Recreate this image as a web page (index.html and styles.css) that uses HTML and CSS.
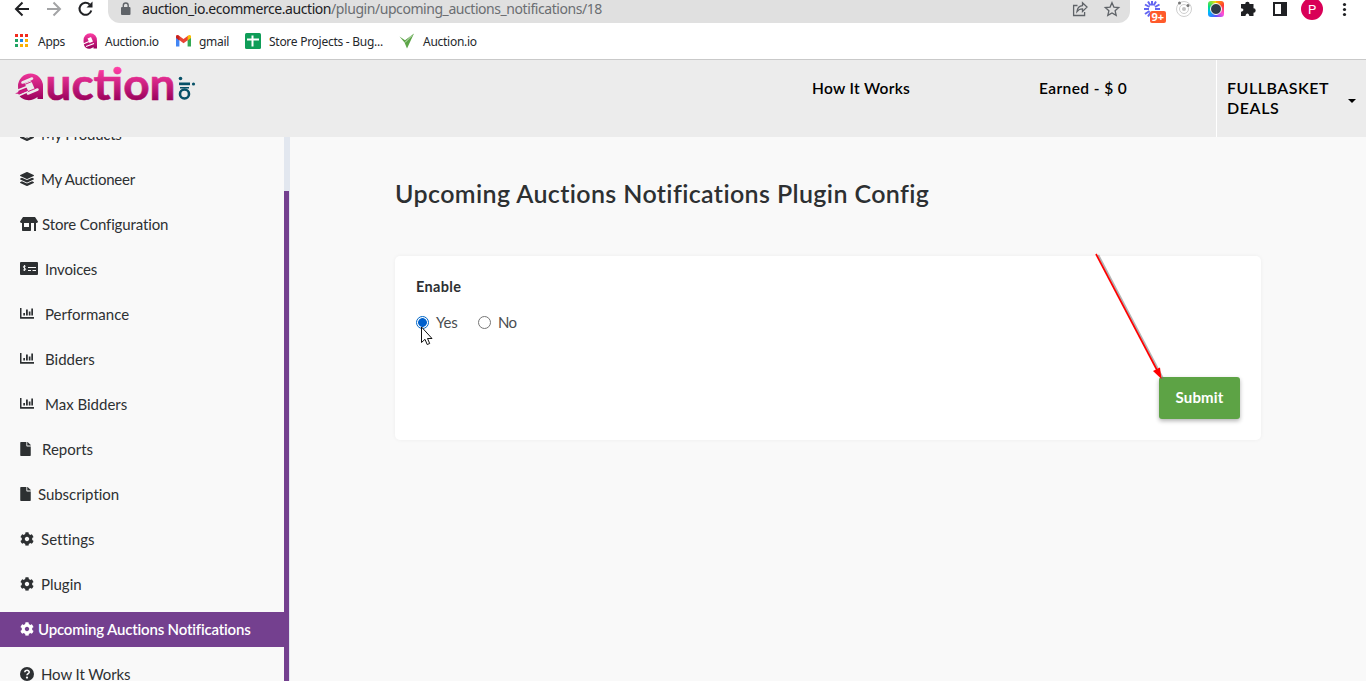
FILE: index.html
```html
<!DOCTYPE html>
<html lang="en">
<head>
<meta charset="utf-8">
<title>Upcoming Auctions Notifications Plugin Config</title>
<link rel="stylesheet" href="styles.css">
</head>
<body>
<svg class="defs" width="0" height="0">
  <defs>
    <linearGradient id="pink" x1="0" y1="0" x2="0" y2="1"><stop offset="0" stop-color="#ff3fa6"/><stop offset="1" stop-color="#98005a"/></linearGradient>
    <linearGradient id="pinkLogo" gradientUnits="userSpaceOnUse" x1="0" y1="8" x2="0" y2="41"><stop offset="0" stop-color="#ff3fa6"/><stop offset="1" stop-color="#98005a"/></linearGradient>
    <symbol id="layers" viewBox="0 0 512 512"><path d="M12.4 148l232.900 105.700c6.800 3.100 14.500 3.100 21.300 0l233-105.700c16.600-7.500 16.600-32.500 0-40L266.700 2.300a25.600 25.600 0 0 0-21.300 0L12.400 108c-16.600 7.500-16.600 32.500 0 40zm487.200 88.300l-58.100-26.300-161.600 73.300c-7.600 3.400-15.600 5.200-23.900 5.200s-16.300-1.700-23.900-5.200L70.500 210l-58.100 26.300c-16.600 7.500-16.600 32.500 0 40l232.900 105.600c6.800 3.100 14.500 3.100 21.300 0L499.600 276.300c16.600-7.500 16.600-32.500 0-40zm0 127.800l-57.900-26.200-161.900 73.400c-7.600 3.400-15.600 5.200-23.900 5.200s-16.300-1.700-23.900-5.200L70.300 337.900l-57.900 26.200c-16.600 7.500-16.600 32.500 0 40l232.900 105.600c6.800 3.100 14.500 3.100 21.300 0L499.600 404.100c16.600-7.500 16.600-32.500 0-40z"/></symbol>
    <symbol id="store" viewBox="0 0 18 14"><path d="M3 0h12l2.800 4.200c.5 1-.2 1.800-1.300 1.800h-15C.4 6-.3 5.200.2 4.200zM2 6h2v4h5V6h2v7c0 .6-.4 1-1 1H3c-.6 0-1-.4-1-1zm12 0h2v8h-2z"/></symbol>
    <symbol id="check" viewBox="0 0 18 13"><rect width="18" height="13" rx="1"/><path d="M8 5.500h8M8 8.500h3M12.500 8.500H16" stroke="#f9f9f9" stroke-width="1.100"/><path d="M5.700 4.300C4.500 3.600 3.200 4 3.300 5c.1 1.200 2.400.9 2.400 2.200 0 1-1.500 1.400-2.600.6M4.500 3v6" fill="none" stroke="#f9f9f9" stroke-width=".9"/></symbol>
    <symbol id="chart" viewBox="0 0 14 11"><path d="M0 0h1.500v9H14v1.800H.6a.6.600 0 0 1-.6-.6zM3.300 5H5v2.500H3.300zM6 1.500h1.800v6H6zM8.800 3.500h1.700v4H8.800zM11.300.5H13v7h-1.700z"/></symbol>
    <symbol id="file" viewBox="0 0 384 512"><path d="M224 136V0H24C10.700 0 0 10.700 0 24v464c0 13.300 10.700 24 24 24h336c13.300 0 24-10.700 24-24V160H248c-13.200 0-24-10.800-24-24zm160-14.100v6.100H256V0h6.100c6.400 0 12.500 2.500 17 7l97.900 98c4.500 4.500 7 10.600 7 16.900z"/></symbol>
    <symbol id="cog" viewBox="0 0 512 512"><path d="M487.400 315.700l-42.600-24.600c4.300-23.200 4.300-47 0-70.200l42.600-24.600c4.900-2.800 7.100-8.600 5.500-14-11.100-35.600-30-67.800-54.700-94.600-3.800-4.100-10-5.100-14.800-2.300L380.800 110c-17.900-15.400-38.500-27.300-60.800-35.100V25.800c0-5.600-3.900-10.500-9.400-11.700-36.700-8.200-74.300-7.800-109.200 0-5.500 1.200-9.400 6.100-9.400 11.700V75c-22.200 7.900-42.800 19.800-60.800 35.100L88.700 85.500c-4.900-2.800-11-1.900-14.800 2.300-24.700 26.700-43.600 58.900-54.700 94.600-1.700 5.400.6 11.200 5.500 14L67.300 221c-4.300 23.200-4.300 47 0 70.200l-42.600 24.600c-4.900 2.800-7.100 8.600-5.500 14 11.100 35.600 30 67.800 54.700 94.600 3.800 4.100 10 5.100 14.800 2.300l42.600-24.600c17.900 15.400 38.500 27.300 60.800 35.100v49.200c0 5.600 3.900 10.500 9.400 11.700 36.700 8.200 74.300 7.800 109.200 0 5.500-1.200 9.400-6.100 9.400-11.700v-49.200c22.200-7.900 42.800-19.800 60.800-35.100l42.600 24.600c4.900 2.800 11 1.900 14.800-2.300 24.700-26.700 43.600-58.900 54.700-94.600 1.500-5.500-.7-11.300-5.600-14.100zM256 336c-44.100 0-80-35.900-80-80s35.900-80 80-80 80 35.900 80 80-35.900 80-80 80z"/></symbol>
    <symbol id="question" viewBox="0 0 14 14"><circle cx="7" cy="7" r="7"/><path d="M4.800 5.300C5 2.600 9.300 2.700 9.200 5.200 9.100 6.700 7.100 6.600 7 8.200" fill="none" stroke="#f9f9f9" stroke-width="1.600"/><circle cx="7" cy="10.600" r="1.150" fill="#f9f9f9"/></symbol>
  </defs>
</svg>
<div class="window">
  <div class="chrome">
    <div class="toolbar">
      <div class="nav-icons">
        <svg width="100" height="19" viewBox="0 0 100 19" fill="none" stroke-width="2">
          <path d="M29 9H16.500M22.500 2.500 16 9l6.500 6.500" stroke="#202124"/>
          <path d="M47 9h12.500M53.500 2.500 60 9l-6.500 6.500" stroke="#a3a4a6"/>
          <path d="M91.300 10.500a6 6 0 1 1-1.600-6" stroke="#202124"/><path d="M92.500 1.500v6h-6z" fill="#202124"/>
        </svg>
      </div>
      <div class="omnibox">
        <svg class="lock" width="10" height="14" viewBox="0 0 10 14"><rect y="5" width="9.500" height="8" rx="1" fill="#5f6368"/><path d="M2.300 5.500V3.500a2.450 2.450 0 0 1 4.900 0v2" fill="none" stroke="#5f6368" stroke-width="1.400"/></svg>
        <div class="url"><span class="host">auction_io.ecommerce.auction</span><span class="path">/plugin/upcoming_auctions_notifications/18</span></div>
        <svg class="omni-actions" width="50" height="19" viewBox="0 0 50 19" fill="none" stroke="#5f6368" stroke-width="1.300"><path d="M5.500 5.500H1.600v10h11v-3.500M5 11.500c.5-4 2.700-5.600 5.500-5.800V2.800l4.500 4.300-4.500 4.400V8.800C8.200 8.800 6.500 9.500 5 11.500z"/><path d="m40 2.700 1.900 4.400 4.800.4-3.600 3.200 1.100 4.700-4.200-2.500-4.200 2.500 1.100-4.700-3.600-3.200 4.800-.4z"/></svg>
      </div>
      <div class="extensions">
        <svg width="226" height="24" viewBox="1140 0 226 24">
          <g stroke="#6366f1" stroke-width="2"><path d="M1144 9h5M1145 4.500l4.500 2.500M1148 1.500l2.500 4M1152 1v4.500M1156 1.500l-2.500 4M1159.500 4.500 1155 7M1145 14l4.500-3M1148 16.500l2.500-4M1155 9h5"/></g>
          <rect x="1150" y="11" width="16" height="12" rx="2" fill="#ff5a2b"/><text class="badge-text" x="1151.500" y="21" fill="#fff">9+</text>
          <g fill="none" stroke="#cfcfcf"><circle cx="1184" cy="9" r="7.500"/><circle cx="1184" cy="9" r="4.500"/></g><circle cx="1184" cy="9" r="2" fill="#c4c4c4"/><circle cx="1179.500" cy="3" r="1.500" fill="#777"/><circle cx="1188" cy="5.500" r="1.500" fill="#777"/>
        </svg>
        <span class="rainbow"><span class="lens"></span></span>
        <svg class="ext-overlay" width="150" height="24" viewBox="1230 0 150 24"><path d="M1241 4h4.200a2.200 2.200 0 0 1 4.400 0h3.900v4.300a2.200 2.200 0 0 1 0 4.400V16h-4.200c-.2-3.400-3.600-3.400-3.800 0H1241v-4.300c3.200-.2 3.200-3.200 0-3.400z" fill="#202124"/><path d="M1274 3h12v12h-12z" fill="none" stroke="#202124" stroke-width="2"/><path d="M1281 2h6v14h-6z" fill="#202124"/><circle cx="1312" cy="9" r="11" fill="#d90057"/><text class="avatar" x="1308" y="13.500" fill="#fff">P</text><g fill="#202124"><circle cx="1344.500" cy="4.500" r="1.600"/><circle cx="1344.500" cy="9.500" r="1.600"/><circle cx="1344.500" cy="14.500" r="1.600"/></g></svg>
      </div>
    </div>
    <div class="bookmarks">
      <div class="bm bm-apps"><svg width="14" height="14" viewBox="0 0 14 14"><path d="M0 0h3v3H0zM5 0h3v3H5zM10 0h3v3h-3z" fill="#f22b1d"/><path d="M0 5h3v3H0z" fill="#20a464"/><path d="M5 5h3v3H5z" fill="#1e88e5"/><path d="M10 5h3v3h-3zM5 10h3v3H5zM10 10h3v3h-3z" fill="#fbb000"/><path d="M0 10h3v3H0z" fill="#20a464"/></svg><span>Apps</span></div>
      <div class="bm bm-auction"><svg width="16" height="16" viewBox="0 0 16 16"><path d="M1.500 8a6.800 7 0 1 1 13.500 0v7.500h-3.500v-1.500C8 17 3 16 2 12z" fill="url(#pink)"/><path d="m5.500 5.500 3.500-1.500 2 4.500-3.500 1.500z" fill="#fff"/><path d="M0 11.500l7-3M4 13.500l8-3" fill="none" stroke="#fff" stroke-width="1.200"/></svg><span>Auction.io</span></div>
      <div class="bm bm-mail"><svg width="15" height="12" viewBox="0 0 15 12"><path d="M0 2v9.500h3.400V3z" fill="#4285f4"/><path d="M11.600 3v8.500H15V2z" fill="#34a853"/><path d="M0 2V1C.5-.5 2-.2 3 .8L7.500 4 12 .8V5L7.500 8.300 3.200 5z" fill="#ea4335"/><path d="M11.600 1C13-.4 14.500-.3 15 1v2l-3.400 2.500z" fill="#fbbc04"/><path d="M0 1.500v1.500L3.400 5.500V1C2-.4.500 0 0 1.500z" fill="#c5221f"/></svg><span>gmail</span></div>
      <div class="bm bm-store"><svg width="16" height="16" viewBox="0 0 16 16"><rect width="16" height="16" rx="1.500" fill="#0f9d58"/><path d="M2 6.500h12M7.500 2.500v11" stroke="#fff" stroke-width="2"/></svg><span>Store Projects - Bug...</span></div>
      <div class="bm bm-io"><svg width="16" height="16" viewBox="0 0 16 16"><path d="M.5 3.500 6 7.200 15 .5 8 15.500 5.500 9.500z" fill="#5da548"/><path d="M6 9.500 13 2.500" stroke="#fff" stroke-width=".7" fill="none"/></svg><span>Auction.io</span></div>
    </div>
  </div>
  <header class="header">
    <div class="logo">
      <svg width="190" height="50" viewBox="10 60 190 50">
        <defs><linearGradient id="wordGrad" gradientUnits="userSpaceOnUse" x1="0" y1="68" x2="0" y2="101"><stop offset="0" stop-color="#ff3fa6"/><stop offset="1" stop-color="#98005a"/></linearGradient></defs>
        <g transform="translate(0 60)"><path fill="url(#pinkLogo)" d="M18 26a12.500 12.500 0 0 1 25 0v13h-5.500v-2C32 42 21 41 18.500 34z"/><path d="m24.500 23 6.500-2.500 4 9-6.500 2.500z" fill="#ececec"/><path d="m22.500 22.500 9.500-4M28 33.500l9.500-4" stroke="#ececec" stroke-width="2.600" stroke-linecap="round"/><path d="M15 31.300 27 26.500M18 36l10-4.500" stroke="#ececec" stroke-width="1.600"/><path d="m15 33.500 11.500-5 1 2.500-8 3z" fill="#cc1880"/><path d="m24.500 24.500 8-3.200M28 31.500l7.500-3" stroke="#cc1880" stroke-width=".9"/></g>
        <text class="logo-word" x="45.500" y="99.500" textLength="130" lengthAdjust="spacingAndGlyphs" fill="url(#wordGrad)" stroke="url(#wordGrad)" stroke-width=".6">uction</text>
        <g fill="#075168"><circle cx="180.500" cy="78.500" r="1.800"/><rect x="179" y="82.500" width="11" height="2.700"/><circle cx="193.500" cy="84" r="1.600"/><circle cx="184.500" cy="94" r="4.500" fill="none" stroke="#075168" stroke-width="2.600"/><rect x="180" y="87" width="9" height="1.500"/></g>
      </svg>
    </div>
    <div class="how"><span>How It Works</span></div>
    <div class="earned"><span>Earned - $ 0</span></div>
    <div class="account"><div><span class="acc1">FULLBASKET</span><br><span class="acc2">DEALS</span></div><i class="caret"></i></div>
  </header>
  <div class="body">
    <nav class="sidebar">
      <div class="item"><svg width="14" height="14"><use href="#layers"/></svg><span class="t-auctioneer">My Products</span></div>
      <div class="item"><svg width="14" height="14"><use href="#layers"/></svg><span class="t-auctioneer">My Auctioneer</span></div>
      <div class="item wide"><svg width="18" height="14"><use href="#store"/></svg><span class="t-store">Store Configuration</span></div>
      <div class="item check"><svg width="18" height="13"><use href="#check"/></svg><span class="t-inv">Invoices</span></div>
      <div class="item chart"><svg width="14" height="11"><use href="#chart"/></svg><span>Performance</span></div>
      <div class="item chart"><svg width="14" height="11"><use href="#chart"/></svg><span>Bidders</span></div>
      <div class="item chart"><svg width="14" height="11"><use href="#chart"/></svg><span>Max Bidders</span></div>
      <div class="item file"><svg width="11" height="14"><use href="#file"/></svg><span>Reports</span></div>
      <div class="item file near"><svg width="11" height="14"><use href="#file"/></svg><span class="t-sub">Subscription</span></div>
      <div class="item"><svg width="14" height="14"><use href="#cog"/></svg><span class="t-set">Settings</span></div>
      <div class="item"><svg width="14" height="14"><use href="#cog"/></svg><span>Plugin</span></div>
      <div class="item active"><svg width="14" height="14"><use href="#cog"/></svg><span class="t-up">Upcoming Auctions Notifications</span></div>
      <div class="item"><svg width="14" height="14"><use href="#question"/></svg><span class="t-how">How It Works</span></div>
    </nav>
    <div class="scrollbar"><div class="thumb"></div></div>
    <main class="content">
      <h1><span>Upcoming Auctions Notifications Plugin Config</span></h1>
      <section class="card">
        <div class="label"><span>Enable</span></div>
        <div class="radios"><i class="radio on"></i><span class="yes">Yes</span><i class="radio"></i><span class="no">No</span></div>
        <div class="actions"><button class="submit"><span>Submit</span></button></div>
      </section>
    </main>
  </div>
  <svg class="pointer" width="14" height="20" viewBox="0 0 14 20"><path d="M.5 1v15.500l3.500-3.200L6.200 18.500l2.500-1-2.200-5H11z" fill="#fff" stroke="#111" stroke-width="1"/></svg>
  <svg class="arrow" width="76" height="134" viewBox="1092 250 76 134"><path d="m1097 255 65 124" stroke="#777" stroke-opacity=".55" stroke-width="2" transform="translate(1.200 0)"/><path d="m1096 254 62 118" stroke="#f00" stroke-width="1.700"/><path d="m1161.500 379-8.500-8 7-3.500z" fill="#f00"/></svg>
</div>
</body>
</html>
```
FILE: styles.css
```css
* { box-sizing: border-box; }
body { margin: 0; font-family: Lato, "Liberation Sans", sans-serif; font-variant-ligatures: none; color: #2d3032; }
svg { display: block; flex: none; overflow: visible; }
.defs { position: absolute; }
.window { position: relative; width: 1366px; height: 681px; overflow: hidden; display: flex; flex-direction: column; background: #f9f9f9; }
.chrome { height: 60px; flex: none; background: #fff; border-bottom: 1px solid #c9c9c9; font-family: "Noto Sans", "Open Sans", sans-serif; }
.toolbar { height: 23px; display: flex; }
.nav-icons { width: 108px; }
.omnibox { width: 1022px; height: 23px; display: flex; align-items: flex-start; background: #e0e0e0; border-radius: 0 0 12px 12px; padding-left: 13px; }
.lock { margin-top: 2px; }
.url { flex: 1; margin-left: 11px; font-size: 14px; line-height: 18px; white-space: nowrap; color: #6b6e72; }
.host { color: #202124; letter-spacing: -.43px; }
.path { letter-spacing: -.44px; }
.omni-actions { margin-right: 8px; }
.extensions { position: relative; width: 236px; padding-left: 10px; display: flex; }
.rainbow { position: absolute; left: 78px; top: 1px; width: 16px; height: 16px; border-radius: 3px; background: conic-gradient(#ffb000, #ff3b30, #ff4fd8 35%, #5a50ff 50%, #00b7ff 68%, #00df80 80%, #ffe000); display: grid; place-items: center; }
.lens { width: 12px; height: 12px; border-radius: 50%; background: #303b48; border: 1.500px solid #fff; }
.ext-overlay { position: absolute; left: 100px; top: 0; }
.badge-text { font: bold 11px "Open Sans", sans-serif; }
.avatar { font: 13px Roboto, sans-serif; }
.bookmarks { height: 36px; display: flex; align-items: center; font-size: 12px; letter-spacing: -.27px; color: #25282c; padding-left: 15px; }
.bm { display: flex; align-items: center; white-space: nowrap; }
.bm-apps { width: 67px; gap: 9px; }
.bm-auction { width: 94px; gap: 7px; }
.bm-mail { width: 69px; gap: 8px; }
.bm-store { width: 154px; gap: 8px; }
.bm-io { gap: 8px; }
.header { height: 77px; flex: none; background: #ececec; display: flex; color: #000; font-size: 15.500px; font-weight: 600; line-height: 20px; }
.logo { width: 812px; padding-left: 10px; }
.logo-word { font: bold 43px Lato, sans-serif; }
.how { width: 227px; padding-top: 18px; letter-spacing: .3px; }
.earned { width: 177px; padding-top: 18px; letter-spacing: .4px; }
.account { width: 150px; border-left: 1px solid #fff; padding: 18px 10px 0; position: relative; white-space: nowrap; font-size: 16px; letter-spacing: .5px; }
.acc2 { letter-spacing: .6px; }
.caret { position: absolute; left: 131px; top: 39px; border: 4px solid transparent; border-top-color: #000; border-bottom: 0; }
.body { flex: 1; display: flex; min-height: 0; }
.sidebar { width: 284px; height: 544px; overflow: hidden; font-size: 15px; }
.sidebar .item:first-child { margin-top: -20px; }
.item { height: 35px; margin-bottom: 10px; padding: 0 0 2px 20px; display: flex; align-items: center; gap: 7px; white-space: nowrap; fill: #2d3032; }
.item.wide { gap: 4px; }
.item.check { gap: 7px; }
.item.chart { gap: 11px; }
.item.file { gap: 11px; }
.item.near { gap: 7px; }
.item.active { gap: 4px; background: #74408f; color: #fff; fill: #fff; font-weight: 600; }
.t-auctioneer { letter-spacing: -.25px; }
.t-store { letter-spacing: -.13px; }
.t-inv { letter-spacing: -.15px; }
.t-sub { letter-spacing: -.05px; }
.t-set { letter-spacing: .08px; }
.t-up { letter-spacing: -.18px; }
.t-how { letter-spacing: -.1px; }
.scrollbar { width: 6px; background: #e2e7ef; }
.thumb { width: 5px; height: 490px; margin-top: 54px; background: #74408f; }
.content { flex: 1; padding: 40px 105px 0; }
h1 { margin: 0; height: 79px; font-size: 25px; line-height: 32px; font-weight: 600; letter-spacing: .38px; white-space: nowrap; }
.card { height: 184px; background: #fff; border-radius: 5px; box-shadow: 0 0 4px rgba(0,0,0,.05); padding: 21px; }
.label { font-size: 14.500px; font-weight: 700; line-height: 20px; letter-spacing: .35px; }
.radios { display: flex; align-items: center; margin-top: 15px; height: 20px; font-size: 15px; line-height: 20px; letter-spacing: -.2px; color: #4a4d50; }
.radio { width: 13px; height: 13px; border: 1px solid #767676; border-radius: 50%; background: #fff; }
.radio.on { border-color: #0067c8; background: radial-gradient(circle, #0060cc 0 4px, #fff 4.700px); }
.yes { width: 42px; margin-left: 7px; }
.no { margin-left: 7px; letter-spacing: -.8px; }
.actions { display: flex; justify-content: flex-end; margin-top: 45px; }
.submit { width: 81px; height: 42px; padding: 0 0 3px; border: 0; border-radius: 3px; background: #5da345; color: #fff; font: bold 15px Lato, sans-serif; letter-spacing: .15px; box-shadow: 0 2px 4px rgba(0,0,0,.3); }
.pointer { position: absolute; left: 421px; top: 326px; }
.arrow { position: absolute; left: 1092px; top: 250px; }
```
